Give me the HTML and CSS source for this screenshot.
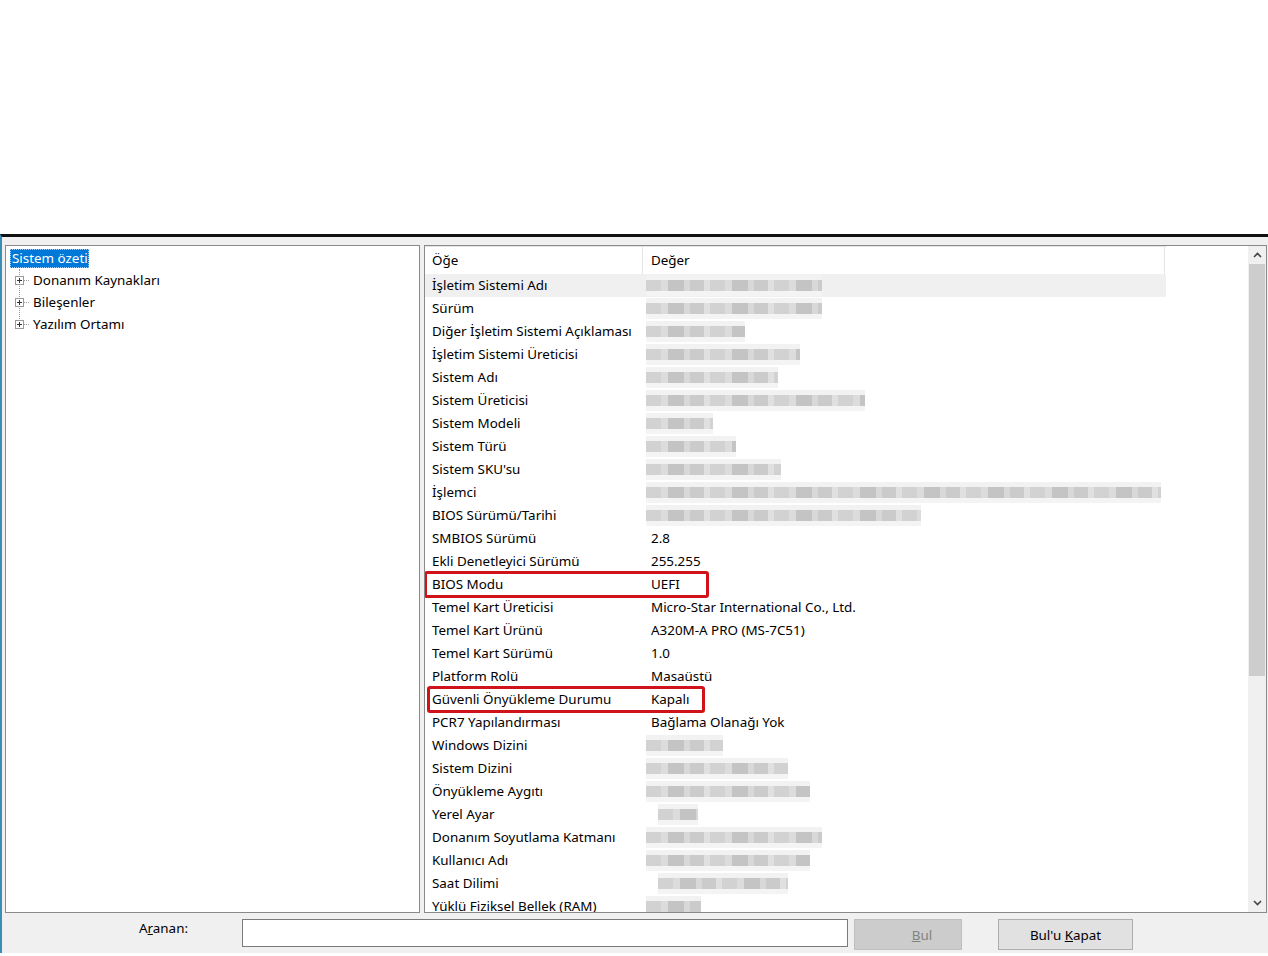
FILE: index.html
```html
<!DOCTYPE html>
<html lang="tr">
<head>
  <meta charset="UTF-8">
  <title>Sistem Bilgileri</title>
  <link rel="stylesheet" href="styles.css">
</head>
<body>
  <div class="blank"></div>

  <div class="window">
    <div class="panes">
      <!-- sol ağaç -->
      <div class="tree">
        <div class="tree-root"><span class="selected">Sistem özeti</span></div>
        <div class="tree-children">
          <div class="tree-item"><span class="plus"></span><span class="stub"></span>Donanım Kaynakları</div>
          <div class="tree-item"><span class="plus"></span><span class="stub"></span>Bileşenler</div>
          <div class="tree-item"><span class="plus"></span><span class="stub"></span>Yazılım Ortamı</div>
        </div>
      </div>

      <!-- sağ liste -->
      <div class="list">
        <div class="list-body">
          <div class="list-head">
            <div class="col-a">Öğe</div>
            <div class="col-b">Değer</div>
          </div>
          <div class="row hover"><div class="col-a">İşletim Sistemi Adı</div><div class="col-b"><span class="blur" style="width:176px"></span></div></div>
          <div class="row"><div class="col-a">Sürüm</div><div class="col-b"><span class="blur" style="width:176px"></span></div></div>
          <div class="row"><div class="col-a">Diğer İşletim Sistemi Açıklaması</div><div class="col-b"><span class="blur" style="width:99px"></span></div></div>
          <div class="row"><div class="col-a">İşletim Sistemi Üreticisi</div><div class="col-b"><span class="blur" style="width:154px"></span></div></div>
          <div class="row"><div class="col-a">Sistem Adı</div><div class="col-b"><span class="blur" style="width:132px"></span></div></div>
          <div class="row"><div class="col-a">Sistem Üreticisi</div><div class="col-b"><span class="blur" style="width:219px"></span></div></div>
          <div class="row"><div class="col-a">Sistem Modeli</div><div class="col-b"><span class="blur" style="width:67px"></span></div></div>
          <div class="row"><div class="col-a">Sistem Türü</div><div class="col-b"><span class="blur" style="width:90px"></span></div></div>
          <div class="row"><div class="col-a">Sistem SKU'su</div><div class="col-b"><span class="blur" style="width:135px"></span></div></div>
          <div class="row"><div class="col-a">İşlemci</div><div class="col-b"><span class="blur" style="width:515px"></span></div></div>
          <div class="row"><div class="col-a">BIOS Sürümü/Tarihi</div><div class="col-b"><span class="blur" style="width:275px"></span></div></div>
          <div class="row"><div class="col-a">SMBIOS Sürümü</div><div class="col-b">2.8</div></div>
          <div class="row"><div class="col-a">Ekli Denetleyici Sürümü</div><div class="col-b">255.255</div></div>
          <div class="row"><div class="col-a">BIOS Modu</div><div class="col-b">UEFI</div><span class="mark mark-bios"></span></div>
          <div class="row"><div class="col-a">Temel Kart Üreticisi</div><div class="col-b">Micro-Star International Co., Ltd.</div></div>
          <div class="row"><div class="col-a">Temel Kart Ürünü</div><div class="col-b">A320M-A PRO (MS-7C51)</div></div>
          <div class="row"><div class="col-a">Temel Kart Sürümü</div><div class="col-b">1.0</div></div>
          <div class="row"><div class="col-a">Platform Rolü</div><div class="col-b">Masaüstü</div></div>
          <div class="row"><div class="col-a">Güvenli Önyükleme Durumu</div><div class="col-b">Kapalı</div><span class="mark mark-boot"></span></div>
          <div class="row"><div class="col-a">PCR7 Yapılandırması</div><div class="col-b">Bağlama Olanağı Yok</div></div>
          <div class="row"><div class="col-a">Windows Dizini</div><div class="col-b"><span class="blur" style="width:77px"></span></div></div>
          <div class="row"><div class="col-a">Sistem Dizini</div><div class="col-b"><span class="blur" style="width:142px"></span></div></div>
          <div class="row"><div class="col-a">Önyükleme Aygıtı</div><div class="col-b"><span class="blur" style="width:164px"></span></div></div>
          <div class="row"><div class="col-a">Yerel Ayar</div><div class="col-b"><span class="blur short" style="width:40px"></span></div></div>
          <div class="row"><div class="col-a">Donanım Soyutlama Katmanı</div><div class="col-b"><span class="blur" style="width:176px"></span></div></div>
          <div class="row"><div class="col-a">Kullanıcı Adı</div><div class="col-b"><span class="blur" style="width:164px"></span></div></div>
          <div class="row"><div class="col-a">Saat Dilimi</div><div class="col-b"><span class="blur short" style="width:130px"></span></div></div>
          <div class="row"><div class="col-a">Yüklü Fiziksel Bellek (RAM)</div><div class="col-b"><span class="blur" style="width:55px"></span></div></div>
        </div>

        <div class="scrollbar">
          <div class="arrow">
            <svg width="9" height="6" viewBox="0 0 9 6"><path d="M1 5 L4.5 1.5 L8 5" fill="none" stroke="#444" stroke-width="1.6"/></svg>
          </div>
          <div class="thumb"></div>
          <div class="track"></div>
          <div class="arrow">
            <svg width="9" height="6" viewBox="0 0 9 6"><path d="M1 1 L4.5 4.5 L8 1" fill="none" stroke="#444" stroke-width="1.6"/></svg>
          </div>
        </div>
      </div>
    </div>

    <!-- arama çubuğu -->
    <div class="findbar">
      <label class="find-label" for="aranan">A<u>r</u>anan:</label>
      <input type="text" id="aranan" class="find-input">
      <button class="btn btn-disabled" disabled><u>B</u>ul</button>
      <button class="btn">Bul'u <u>K</u>apat</button>
    </div>
  </div>
</body>
</html>
```

FILE: styles.css
```css
body {
  margin: 0;
  background: #fff;
  font-family: "Noto Sans", "Open Sans", Arial, sans-serif;
  font-size: 13.4px;
  color: #000;
}

.blank {
  height: 234px;
  background: #fff;
}

.window {
  border-top: 3px solid #111;
  border-left: 2px solid #3a8db3;
  background: #f0f0f0;
  height: 719px;
  padding: 8px 1px 0 3px;
  box-sizing: border-box;
}

.panes {
  display: flex;
  gap: 4px;
  height: 668px;
}

/* ağaç */
.tree {
  width: 415px;
  background: #fff;
  border: 1px solid #8a8a8a;
  box-sizing: border-box;
  padding: 3px 0 0 4px;
  line-height: 22px;
}

.tree-root {
  height: 20px;
  line-height: 19px;
}

.selected {
  display: inline-block;
  background: #0078d7;
  color: #fff;
  padding: 0 1px 0 2px;
  outline: 1px dotted #9bd0ff;
  outline-offset: -1px;
}

.tree-children {
  position: relative;
  padding-left: 5px;
}

.tree-children::before {
  content: "";
  position: absolute;
  left: 9px;
  top: 0;
  height: 56px;
  border-left: 1px dotted #999;
}

.tree-item {
  display: flex;
  align-items: center;
  height: 22px;
}

.plus {
  position: relative;
  width: 9px;
  height: 9px;
  border: 1px solid #9a9a9a;
  background: #fff;
  box-sizing: border-box;
  z-index: 1;
}

.plus::before {
  content: "";
  position: absolute;
  left: 1px;
  top: 3px;
  width: 5px;
  height: 1px;
  background: #333;
}

.plus::after {
  content: "";
  position: absolute;
  left: 3px;
  top: 1px;
  width: 1px;
  height: 5px;
  background: #333;
}

.stub {
  width: 5px;
  margin-right: 4px;
  border-top: 1px dotted #999;
}

/* liste */
.list {
  flex: 1;
  display: flex;
  background: #fff;
  border: 1px solid #8a8a8a;
  box-sizing: border-box;
  overflow: hidden;
}

.list-body {
  width: 741px;
  overflow: hidden;
}

.list-head {
  display: flex;
  height: 27px;
  line-height: 27px;
  border-top: 1px solid #e5e5e5;
}

.list-head .col-a {
  border-right: 1px solid #e5e5e5;
}

.list-head .col-b {
  border-right: 1px solid #e5e5e5;
}

.row {
  position: relative;
  display: flex;
  height: 23px;
  line-height: 23px;
  white-space: nowrap;
}

.row.hover {
  background: #f0f0f0;
}

.col-a {
  width: 218px;
  padding-left: 7px;
  box-sizing: border-box;
}

.col-b {
  width: 522px;
  padding-left: 8px;
  box-sizing: border-box;
  display: flex;
  align-items: center;
}

.blur {
  display: inline-block;
  height: 11px;
  margin-left: -5px;
  background: repeating-linear-gradient(90deg,
    #d2d2d2 0 15px, #dcdcdc 15px 22px, #c4c4c4 22px 38px,
    #d8d8d8 38px 44px, #cbcbcb 44px 58px, #e0e0e0 58px 64px);
  box-shadow: 0 -5px 0 #f2f2f2, 0 5px 0 #f4f4f4;
}

.blur.short {
  margin-left: 7px;
}

.mark {
  position: absolute;
  border: 3px solid #d0121b;
  border-radius: 3px;
}

.mark-bios {
  left: -1px;
  top: -2px;
  width: 279px;
  height: 21px;
}

.mark-boot {
  left: 2px;
  top: -2px;
  width: 272px;
  height: 21px;
}

/* kaydırma çubuğu */
.scrollbar {
  margin-left: auto;
  width: 18px;
  display: flex;
  flex-direction: column;
  background: #f0f0f0;
}

.arrow {
  height: 18px;
  display: flex;
  align-items: center;
  justify-content: center;
}

.thumb {
  height: 412px;
  margin: 0 1px;
  background: #cdcdcd;
}

.track {
  flex: 1;
}

/* arama çubuğu */
.findbar {
  display: flex;
  align-items: flex-start;
  padding-top: 6px;
}

.find-label {
  width: 183px;
  text-align: right;
  margin-right: 54px;
}

.find-input {
  width: 606px;
  height: 28px;
  border: 1px solid #7a7a7a;
  box-sizing: border-box;
  margin: 0 6px 0 0;
  background: #fff;
}

.btn {
  width: 108px;
  height: 31px;
  border: 1px solid #adadad;
  background: #e1e1e1;
  font-family: inherit;
  font-size: 13.4px;
  color: #000;
  margin-right: 36px;
  padding: 0;
}

.btn + .btn {
  width: 135px;
}

.btn-disabled {
  background: #cccccc;
  border-color: #bfbfbf;
  color: #838383;
  padding-left: 28px;
}
```
